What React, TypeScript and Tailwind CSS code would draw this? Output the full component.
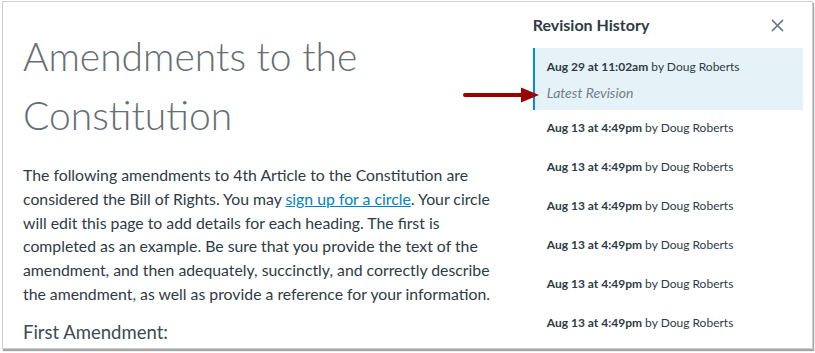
import React from 'react';

const revisions = [
  { date: 'Aug 13 at 4:49pm', author: 'Doug Roberts' },
  { date: 'Aug 13 at 4:49pm', author: 'Doug Roberts' },
  { date: 'Aug 13 at 4:49pm', author: 'Doug Roberts' },
  { date: 'Aug 13 at 4:49pm', author: 'Doug Roberts' },
  { date: 'Aug 13 at 4:49pm', author: 'Doug Roberts' },
  { date: 'Aug 13 at 4:49pm', author: 'Doug Roberts' },
];

function CloseIcon() {
  return (
    <svg width="13" height="13" viewBox="0 0 14 14" fill="none" stroke="#6b7780" strokeWidth="1.6" strokeLinecap="round">
      <path d="M1.5 1.5l11 11M12.5 1.5l-11 11" />
    </svg>
  );
}

// Red callout arrow pointing at the latest revision
function Arrow() {
  return (
    <svg width="78" height="18" viewBox="0 0 78 18" className="absolute left-[-72px] top-[38px]">
      <path d="M2 9h58" stroke="#990000" strokeWidth="4" strokeLinecap="round" />
      <path d="M58 1.5L76 9L58 16.5Z" fill="#990000" />
    </svg>
  );
}

export default function App() {
  return (
    <div className="w-[815px] h-[353px] bg-white overflow-hidden" style={{ fontFamily: 'Lato, "Noto Sans", sans-serif' }}>
      <div className="ml-[2px] mt-[1px] w-[811px] h-[348px] border border-[#cfcfcf] shadow-[1px_2px_1px_rgba(0,0,0,0.35)] flex overflow-hidden">
        {/* Page content */}
        <div className="w-[510px] pl-[20px] pt-[25px] text-[#2d3b45]">
          <h1 className="text-[39px] leading-[59px] font-light text-[#666e73]">
            Amendments to the Constitution
          </h1>
          <p className="mt-[18px] text-[15.8px] leading-[23.8px] w-[472px]">
            The following amendments to 4th Article to the Constitution are considered the Bill of Rights. You may{' '}
            <a className="text-[#0081c6] underline">sign up for a circle</a>. Your circle will edit this page to add
            details for each heading. The first is completed as an example. Be sure that you provide the text of the
            amendment, and then adequately, succinctly, and correctly describe the amendment, as well as provide a
            reference for your information.
          </p>
          <h2 className="mt-[13px] text-[18.5px] leading-[26px] text-[#3d4a53]">First Amendment:</h2>
        </div>

        {/* Revision history sidebar */}
        <div className="w-[280px] ml-[21px] pt-[12px]">
          <div className="flex items-center justify-between pr-[28px] h-[22px]">
            <h2 className="text-[16px] font-bold text-[#2d3b45]">Revision History</h2>
            <CloseIcon />
          </div>
          <div className="relative mt-[12px] h-[62px] bg-[#e5f2f8] border-l-2 border-[#008ee2] pl-[12px] pt-[10px] w-[270px]">
            <Arrow />
            <div className="text-[12px] leading-[18px] text-[#2d3b45]">
              <span className="font-bold">Aug 29 at 11:02am</span> by Doug Roberts
            </div>
            <div className="mt-[8px] text-[14px] leading-[18px] italic text-[#73818c]">Latest Revision</div>
          </div>
          <div className="pl-[14px] pt-[9px]">
            {revisions.map((r, i) => (
              <div key={i} className="h-[39px] text-[12px] leading-[18px] text-[#2d3b45]">
                <span className="font-bold">{r.date}</span> by {r.author}
              </div>
            ))}
          </div>
        </div>
      </div>
    </div>
  );
}
